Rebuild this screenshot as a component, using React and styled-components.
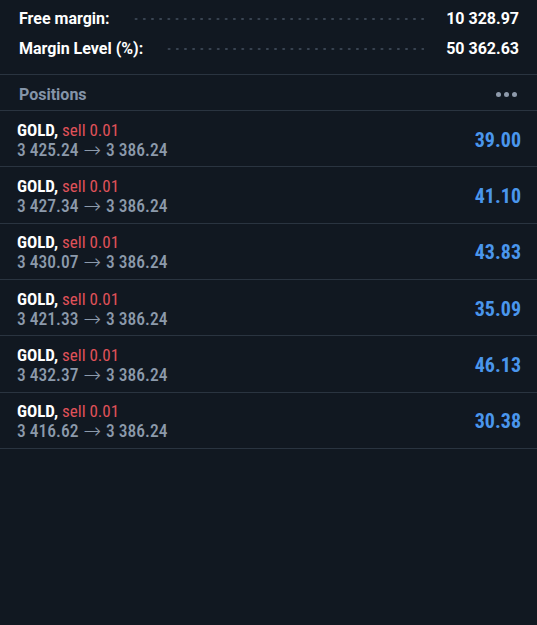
import React from "react";
import styled, { createGlobalStyle } from "styled-components";

const GlobalStyle = createGlobalStyle`
  html, body {
    margin: 0;
    padding: 0;
    background: #111821;
  }
  body {
    font-family: "Roboto Condensed", Roboto, "Liberation Sans", sans-serif;
  }
`;

const positions = [
  { open: "3 425.24", profit: "39.00" },
  { open: "3 427.34", profit: "41.10" },
  { open: "3 430.07", profit: "43.83" },
  { open: "3 421.33", profit: "35.09" },
  { open: "3 432.37", profit: "46.13" },
  { open: "3 416.62", profit: "30.38" },
];

function App() {
  return (
    <Page>
      <GlobalStyle />
      <Summary>
        <SummaryRow>
          <Label>Free margin:</Label>
          <Dots />
          <Amount>10 328.97</Amount>
        </SummaryRow>
        <SummaryRow>
          <Label>Margin Level (%):</Label>
          <Dots />
          <Amount>50 362.63</Amount>
        </SummaryRow>
      </Summary>
      <Header>
        <HeaderTitle>Positions</HeaderTitle>
        <More>
          <span />
          <span />
          <span />
        </More>
      </Header>
      <List>
        {positions.map((p, i) => (
          <Row key={i}>
            <Info>
              <Title>
                <Symbol>GOLD,</Symbol> <Side>sell 0.01</Side>
              </Title>
              <Prices>
                {p.open}
                <Arrow>→</Arrow>
                3 386.24
              </Prices>
            </Info>
            <Profit>{p.profit}</Profit>
          </Row>
        ))}
      </List>
    </Page>
  );
}

export default App;

const Page = styled.div`
  width: 537px;
  min-height: 625px;
  background: #111821;
  color: #fff;
`;

const Summary = styled.div`
  display: flex;
  flex-direction: column;
  padding: 3px 18px 11px 19px;
  border-bottom: 1px solid #2a3440;
  font-family: Roboto, "Liberation Sans", sans-serif;
`;

const SummaryRow = styled.div`
  display: flex;
  align-items: center;
  height: 30px;
`;

const Label = styled.span`
  font-size: 16px;
  font-weight: 700;
  color: #fff;
  white-space: nowrap;
`;

const Dots = styled.span`
  flex: 1;
  height: 2px;
  margin: 2px 22px 0;
  background-image: radial-gradient(circle, #3a4553 1px, transparent 1.2px);
  background-size: 8.2px 2px;
  background-repeat: repeat-x;
`;

const Amount = styled.span`
  font-size: 16px;
  font-weight: 700;
  color: #fff;
  white-space: nowrap;
`;

const Header = styled.div`
  display: flex;
  align-items: center;
  justify-content: space-between;
  box-sizing: border-box;
  height: 36px;
  padding: 3px 20px 0 19px;
  border-bottom: 1px solid #2a3440;
  font-family: Roboto, "Liberation Sans", sans-serif;
`;

const HeaderTitle = styled.span`
  font-size: 16px;
  font-weight: 700;
  color: #8494a8;
`;

const More = styled.div`
  display: flex;
  gap: 3px;
  & > span {
    width: 5px;
    height: 5px;
    border-radius: 50%;
    background: #8e9aab;
  }
`;

const List = styled.div`
  display: flex;
  flex-direction: column;
`;

const Row = styled.div`
  display: flex;
  align-items: center;
  justify-content: space-between;
  box-sizing: border-box;
  height: 56.33px;
  padding: 2px 16px 0 17px;
  border-bottom: 1px solid #2a3440;
`;

const Info = styled.div`
  display: flex;
  flex-direction: column;
`;

const Title = styled.div`
  font-size: 17px;
  line-height: 20px;
  height: 20px;
`;

const Symbol = styled.span`
  font-weight: 700;
  color: #fff;
`;

const Side = styled.span`
  color: #e0525a;
`;

const Prices = styled.div`
  display: flex;
  align-items: center;
  height: 20px;
  font-size: 17.5px;
  line-height: 20px;
  font-weight: 500;
  color: #8c9aab;
  white-space: pre;
`;

const Arrow = styled.span`
  font-family: "DejaVu Sans", sans-serif;
  font-size: 21px;
  font-weight: 200;
  line-height: 20px;
  margin: 0 5px;
`;

const Profit = styled.span`
  font-size: 20px;
  font-weight: 700;
  color: #4a96ec;
`;
